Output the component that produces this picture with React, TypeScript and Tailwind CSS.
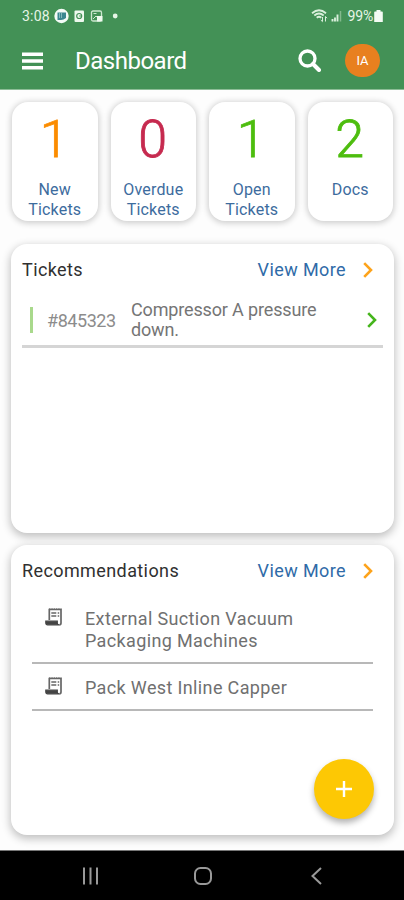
import type { ReactNode } from 'react';

const stats = [
  { value: 1, label: 'New Tickets', color: 'text-[#fb8c00]' },
  { value: 0, label: 'Overdue Tickets', color: 'text-[#c62a4f]' },
  { value: 1, label: 'Open Tickets', color: 'text-[#4dbd0e]' },
  { value: 2, label: 'Docs', color: 'text-[#4dbd0e]' },
];

const recommendations = ['External Suction Vacuum Packaging Machines', 'Pack West Inline Capper'];

function Chevron({ className }: { className: string }) {
  return (
    <svg viewBox="0 0 10 16" className={`w-[10px] h-4 shrink-0 ${className}`} fill="none" stroke="currentColor" strokeWidth="2.6">
      <path d="M1.2 1.2 8 8l-6.800 6.800" />
    </svg>
  );
}

function ReceiptIcon() {
  return (
    <svg viewBox="0 0 18 20" className="w-[18px] h-5 shrink-0 text-[#666]" fill="none" stroke="currentColor">
      <path d="M4.300 12V1.500h11.700v13.500q0 1.800-1.800 1.800" strokeWidth="1.700" />
      <path d="M4 .9h12.500" strokeWidth="1" strokeDasharray="1.500 .8" />
      <path d="M.8 13.200h11.500v1.800q0 1.800 1.800 1.800H2.600q-1.800 0-1.800-1.800z" fill="#444" stroke="#444" strokeWidth="1.200" />
      <path d="M6.300 5h5M12.700 5h1.500M6.300 8h5M12.700 8h1.500" strokeWidth="1.600" />
    </svg>
  );
}

function StatusBar() {
  return (
    <div className="h-8 flex items-center justify-between pl-[22px] pr-[21px] text-[14px] text-[#e6f5e6]">
      <div className="flex items-center">
        <span className="w-[32px] tracking-[0.2px]">3:08</span>
        <svg viewBox="0 0 64 16" className="w-16 h-4">
          <circle cx="7.500" cy="8" r="7.200" fill="#f4fbf7" />
          <path d="M3.500 4.500h8.500v5.500q-2.500 2-5 2H3.500z" fill="#3b8790" />
          <path d="M5.500 5v5M7.500 5v5" stroke="#a4cfd0" strokeWidth=".7" />
          <rect x="20.500" y="2.500" width="9.500" height="11.500" rx="1" fill="#eef8ee" />
          <circle cx="25.200" cy="8" r="2.500" fill="none" stroke="#439156" strokeWidth="1.200" />
          <path d="M25.200 8h2.500" stroke="#439156" />
          <rect x="37.500" y="3" width="10" height="10" rx="1.500" fill="none" stroke="#cde7cf" strokeWidth="1.300" />
          <path d="M39 11l3-3 2 2M39.500 5.500h3" fill="none" stroke="#cde7cf" />
          <rect x="43" y="8" width="5.500" height="5.500" fill="#f0faf0" />
          <circle cx="61.200" cy="8" r="2.400" fill="#e6f5e6" />
        </svg>
      </div>
      <div className="flex items-center">
        <svg viewBox="0 0 34 16" className="w-[34px] h-4" fill="none" stroke="#d9efdb">
          <path d="M1 5.200q7-6 14 0M3.300 7.500q4.700-4 9.400 0M5.700 9.800q2.300-2 4.600 0" strokeWidth="1.800" />
          <path d="M11.500 9v4.500M9.800 12l1.700 1.700M14.500 13.500V8.500M14.500 8.500l1.500 1.700" />
          <path d="M21.500 13.500v-2.500M24 13.500v-4M26.500 13.500v-7" strokeWidth="1.900" />
          <path d="M29.500 13.500V3" strokeWidth="1.500" stroke="#83b98d" />
        </svg>
        <span className="ml-[3px] tracking-[-0.2px]">99%</span>
        <svg viewBox="0 0 9 12" className="ml-px w-[9px] h-3" fill="#f4fbf4">
          <path d="M2.500 0h4v1.500H8q.8 0 .8.800V12H.2V2.300q0-.8.8-.8h1.500z" />
        </svg>
      </div>
    </div>
  );
}

function Panel({ title, className, children }: { title: string; className: string; children: ReactNode }) {
  return (
    <section className={`bg-white rounded-[16px] shadow-[0_3px_8px_1px_rgba(0,0,0,0.24)] ${className}`}>
      <div className="h-[51px] pl-[11px] pr-[21px] flex items-center text-[18px] tracking-[0.4px]">
        <h2 className="text-[#303030]">{title}</h2>
        <button className="ml-auto flex items-center gap-[17px] text-[#2f6ba8]">
          View More
          <Chevron className="text-[#fda31b]" />
        </button>
      </div>
      {children}
    </section>
  );
}

export default function App() {
  return (
    <div className="w-[404px] h-[900px] flex flex-col overflow-hidden bg-[#fdfdfd] font-[Roboto,sans-serif]">
      <header className="h-[90px] shrink-0 bg-[#439156] border-b border-[#8dbd97]">
        <StatusBar />
        <div className="h-[57px] pl-[22px] pr-6 flex items-center text-white">
          <svg viewBox="0 0 21 18" className="w-[21px] h-[18px]" fill="currentColor">
            <path d="M0 .5h21v3.600H0zM0 7.200h21v3.600H0zM0 14h21v3.600H0z" />
          </svg>
          <h1 className="ml-[32px] text-[24px] tracking-[-0.5px]">Dashboard</h1>
          <svg viewBox="0 0 23 23" className="ml-auto w-[23px] h-[23px]" fill="none" stroke="currentColor">
            <circle cx="9.500" cy="9.500" r="7.500" strokeWidth="3.300" />
            <path d="M15 15l6 6" strokeWidth="4" strokeLinecap="round" />
          </svg>
          <div className="ml-6 w-[35px] h-[33px] rounded-full bg-[#e8801f] flex items-center justify-center text-[13px]">
            IA
          </div>
        </div>
      </header>

      <main className="flex-1 pt-3 pl-[11px] pr-[10px]">
        <div className="flex gap-[13px] px-px">
          {stats.map((s) => (
            <div
              key={s.label}
              className="flex-1 h-[119px] rounded-[16px] bg-white shadow-[0_1px_6px_1px_rgba(0,0,0,0.2)] flex flex-col items-center"
            >
              <span className={`mt-[10px] mr-px text-[52px] leading-[56px] font-light [-webkit-text-stroke:0.8px] ${s.color}`}>{s.value}</span>
              <span className="mt-[12px] w-[70px] text-center text-[16px] leading-[20px] tracking-[0.2px] text-[#3d6c9e]">{s.label}</span>
            </div>
          ))}
        </div>

        <Panel title="Tickets" className="mt-[23px] h-[289px]">
          <div className="mx-[11px] h-[53px] pl-[8px] pr-[6px] flex items-center border-b-[3px] border-[#d5d5d5] text-[18px]">
            <div className="w-[3px] h-[26px] bg-[#a9d98c]" />
            <span className="ml-[14px] w-[84px] tracking-[-0.45px] text-[#8c8c8c]">#845323</span>
            <p className="w-[200px] leading-[20px] tracking-[-0.15px] text-[#757575]">Compressor A pressure down.</p>
            <Chevron className="ml-auto text-[#45b51c]" />
          </div>
        </Panel>

        <Panel title="Recommendations" className="relative mt-3 h-[290px]">
          <ul className="mx-[21px]">
            {recommendations.map((name) => (
              <li
                key={name}
                className="pt-[12px] pb-[10px] last:pt-[13px] pl-[13px] flex items-start border-b-2 border-[#b8b8b8] text-[18px] leading-[22px] tracking-[0.36px] text-[#707070]"
              >
                <ReceiptIcon />
                <span className="ml-[22px] w-[230px]">{name}</span>
              </li>
            ))}
          </ul>
          <button className="absolute right-[20px] bottom-[16px] w-[60px] h-[60px] rounded-full bg-[#fdc804] shadow-[0_4px_6px_rgba(0,0,0,0.3)] flex items-center justify-center">
            <svg viewBox="0 0 16 16" className="w-4 h-4" stroke="white" strokeWidth="2.400">
              <path d="M8 0v16M0 8h16" />
            </svg>
          </button>
        </Panel>
      </main>

      <nav className="h-[50px] shrink-0 bg-black border-t border-[#777] flex items-center pl-[82px]">
        <svg viewBox="0 0 242 20" className="w-[242px] h-5" fill="none" stroke="#999" strokeWidth="2">
          <path d="M2 1.500v17M8.500 1.500v17M15 1.500v17" />
          <rect x="113" y="2" width="16" height="16" rx="5.500" />
          <path d="M239 2l-8.500 8 8.500 8" />
        </svg>
      </nav>
    </div>
  );
}
